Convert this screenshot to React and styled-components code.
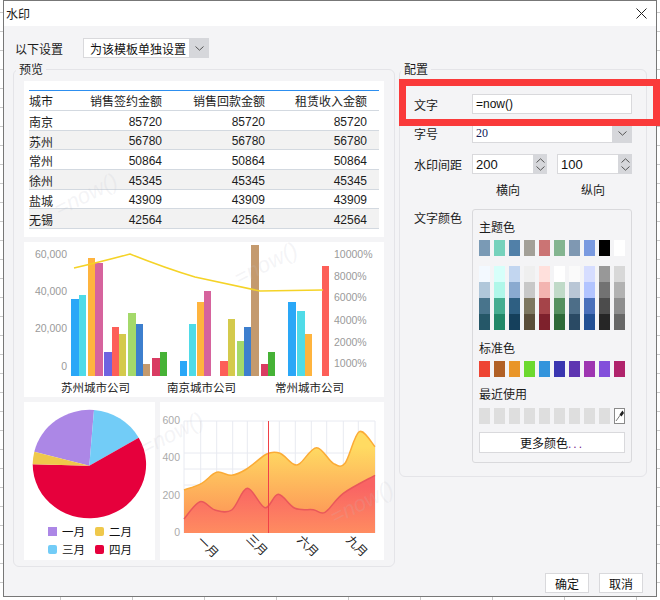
import React from "react";
import styled, { createGlobalStyle } from "styled-components";

const GlobalStyle = createGlobalStyle`
  html, body {
    margin: 0;
    height: 100%;
    overflow: hidden;
    background-color: #fff;
    background-image:
      linear-gradient(#c9c9c9 1px, transparent 1px),
      linear-gradient(90deg, #c9c9c9 1px, transparent 1px);
    background-size: 72px 19px;
    background-position: 60px 12px;
  }
  * { box-sizing: border-box; }
`;

const Page = styled.div`
  position: relative;
  width: 660px;
  height: 600px;
  padding: 0 3px 3px;
  font-family: "Liberation Sans", "Noto Sans CJK SC", sans-serif;
  font-size: 12px;
  color: #1c1c1c;
`;

const Dialog = styled.div`
  height: 597px;
  display: flex;
  flex-direction: column;
  border: 1px solid #777;
`;

const TitleBar = styled.div`
  height: 25px;
  flex: none;
  display: flex;
  align-items: center;
  justify-content: space-between;
  padding: 0 9px 0 2px;
  background: #fff;
`;

const Body = styled.div`
  flex: 1;
  display: flex;
  flex-direction: column;
  padding: 12px 9px 3px;
  background: #f4f4f6;
`;

const SettingRow = styled.div`
  height: 20px;
  display: flex;
  align-items: center;
  gap: 20px;
  padding-left: 2px;
`;

const Columns = styled.div`
  display: flex;
  align-items: flex-start;
  gap: 4px;
  margin-top: 3px;
`;

const Group = styled.fieldset`
  position: relative;
  flex: none;
  margin: 0;
  min-width: 0;
  width: ${(p) => p.$width}px;
  height: ${(p) => p.$height}px;
  border: 1px solid #e4e4e8;
  border-radius: 6px;
  padding: ${(p) => p.$padding};
`;

const Legend = styled.legend`
  margin-left: ${(p) => p.$offset}px;
  padding: 0 3px;
  height: 16px;
  line-height: 18px;
`;

const Panel = styled.div`
  background: #fff;
  flex: none;
  width: ${(p) => p.$width || 360}px;
  height: ${(p) => p.$height}px;
  padding: ${(p) => p.$padding || 0};
  margin-bottom: ${(p) => p.$gap || 0}px;
  overflow: hidden;
`;

const PanelRow = styled.div`
  display: flex;
  gap: 5px;
`;

const DataTable = styled.div`
  border-top: 1px solid #2d8ff0;
`;

const DataRow = styled.div`
  display: grid;
  grid-template-columns: 40px 93px 103px 102px;
  align-items: center;
  height: ${(p) => p.$height}px;
  padding-top: ${(p) => p.$nudge || 0}px;
  border-bottom: 1px solid #d3d9e0;
  background: ${(p) => (p.$striped ? "#f2f2f2" : "#fff")};
  white-space: nowrap;
`;

const NumCell = styled.span`
  text-align: right;
`;

const Chart = styled.svg`
  display: block;
`;

const PieLegend = styled.div`
  display: grid;
  grid-template-columns: 47px 47px;
  row-gap: 4px;
  margin-top: 2px;
  padding-left: 24px;
`;

const LegendItem = styled.div`
  display: flex;
  align-items: center;
  gap: 5px;
  height: 14px;
  font-size: 11.5px;
  color: #111;
`;

const LegendSwatch = styled.i`
  width: 9px;
  height: 9px;
  border-radius: ${(p) => (p.$round ? 2 : 0)}px;
  background: ${(p) => p.$color};
`;

const Watermark = styled.span`
  position: absolute;
  left: ${(p) => p.$x}px;
  top: ${(p) => p.$y}px;
  transform: translate(-50%, -50%) rotate(-27deg);
  font-size: 22px;
  font-style: italic;
  color: rgba(190, 190, 200, 0.16);
  pointer-events: none;
`;

const FormRow = styled.div`
  display: flex;
  align-items: ${(p) => (p.$top ? "flex-start" : "center")};
  min-height: 20px;
  margin-top: ${(p) => p.$mt || 0}px;
`;

const FieldLabel = styled.label`
  width: 58px;
  flex: none;
`;

const Field = styled.div`
  width: ${(p) => p.$width}px;
  height: 20px;
  display: flex;
  align-items: center;
  justify-content: space-between;
  background: #fff;
  border: 1px solid #d9d9dc;
  padding-left: ${(p) => p.$pad || 3}px;
  font-size: ${(p) => p.$size || 12}px;
  color: #111;
`;

const SizeValue = styled.span`
  font-family: "Liberation Serif", serif;
  color: #12205a;
`;

const ArrowBox = styled.span`
  width: 20px;
  height: 20px;
  margin-right: -1px;
  flex: none;
  display: flex;
  align-items: center;
  justify-content: center;
  background: #d6d7db;
`;

const Spinner = styled.span`
  width: 14px;
  height: 20px;
  margin-right: -1px;
  flex: none;
  display: flex;
  flex-direction: column;
  align-items: center;
  justify-content: space-around;
  padding: 2px 0;
  background: #d6d7db;
`;

const Pair = styled.div`
  display: flex;
  gap: 10px;
`;

const AxisNames = styled.div`
  display: flex;
  margin: 10px 0 0 82px;
  gap: 61px;
  height: 14px;
  line-height: 15px;
`;

const ColorPanel = styled.div`
  width: 160px;
  height: 254px;
  padding: 0 6px;
  border: 1px solid #d9d9dc;
  border-radius: 3px;
`;

const ColorTitle = styled.div`
  height: 16px;
  line-height: 16px;
  margin-top: ${(p) => p.$mt}px;
`;

const SwatchRow = styled.div`
  display: flex;
  gap: 4px;
  margin-top: ${(p) => p.$mt || 0}px;
`;

const Swatch = styled.i`
  display: block;
  width: 11px;
  height: 16px;
  flex: none;
  background: ${(p) => p.$color};
`;

const Dropper = styled.span`
  width: 11px;
  height: 16px;
  flex: none;
  display: flex;
  align-items: center;
  justify-content: center;
  background: #fff;
  border: 1px solid #8a8a8a;
`;

const MoreButton = styled.button`
  display: block;
  width: 146px;
  height: 21px;
  margin-top: 8px;
  padding: 0;
  font: inherit;
  color: #111;
  background: #fff;
  border: 1px solid #d9d9dc;
`;

const Dots = styled.span`
  color: #7a2a8a;
  letter-spacing: 2px;
`;

const Footer = styled.div`
  margin-top: auto;
  padding-right: 4px;
  display: flex;
  justify-content: flex-end;
  gap: 10px;
`;

const FootButton = styled.button`
  width: 44px;
  height: 20px;
  padding: 0;
  font: inherit;
  color: #111;
  background: #fff;
  border: 1px solid #d9d9dc;
`;

const Highlight = styled.div`
  position: absolute;
  left: 399px;
  top: 79px;
  width: 261px;
  height: 47px;
  border: 7px solid #fa3a3a;
  pointer-events: none;
`;

const rows = [
  ["南京", 85720],
  ["苏州", 56780],
  ["常州", 50864],
  ["徐州", 45345],
  ["盐城", 43909],
  ["无锡", 42564],
];

const themeColors = ["#7a9ab5", "#76d2bc", "#5180a8", "#a3a098", "#cb7474", "#84b590", "#7f98b2", "#7a9ae0", "#000000", "#ffffff"];
const tintRows = [
  ["#f3f9ff", "#d7fffa", "#c2d6f0", "#efefef", "#ffe0dc", "#ffffff", "#fafafa", "#d6ddff", "#989898", "#d8d8d8"],
  ["#b0c7da", "#b0f7e9", "#8aaad0", "#c8c8c8", "#f3b4b0", "#c0dac8", "#b9c6d5", "#b2c4ff", "#727272", "#b2b2b2"],
  ["#48748c", "#46ad90", "#2e5f82", "#7d7760", "#a54449", "#55905f", "#4d6e88", "#4a70bb", "#4c4c4c", "#8e8e8e"],
  ["#255768", "#228868", "#15405c", "#5a4e3a", "#7e212c", "#2e6a38", "#2a4a64", "#235095", "#262626", "#686868"],
];
const standardColors = ["#ee4433", "#b16025", "#e99528", "#6cd92f", "#3394dc", "#3a35b0", "#5e35b1", "#9e35b1", "#834fdb", "#b0236b"];

const BLUE = "#2aa7f7";
const CYAN = "#4fdbe8";
const ORANGE = "#ffb43e";
const PINK = "#d6639d";
const RED = "#fd5f58";
const YELLOW = "#d4ca4c";
const LIME = "#a4d96a";
const STEEL = "#3d7fce";
const TAN = "#c49a6e";
const CRIMSON = "#d93c62";
const GREEN = "#46b236";

// [x, width, top, colour] in page pixels, every bar ends on y = 376
const bars = [
  [71, 8, 299, BLUE], [79, 7, 295, CYAN], [88, 7, 258, ORANGE], [95, 8, 263, PINK],
  [104, 8, 352, "#6f63e0"], [112, 7, 327, RED], [119, 7, 334, YELLOW], [128, 8, 313, LIME],
  [136, 7, 324, STEEL], [143, 7, 364, TAN], [152, 8, 358, CRIMSON], [160, 7, 352, GREEN],
  [180, 7, 361, BLUE], [189, 7, 324, CYAN], [197, 7, 302, ORANGE], [204, 7, 291, PINK],
  [220, 8, 361, RED], [228, 7, 319, YELLOW], [237, 7, 341, LIME], [244, 7, 327, STEEL],
  [251, 8, 245, TAN], [261, 7, 364, CRIMSON], [268, 7, 352, GREEN],
  [288, 8, 302, BLUE], [297, 8, 311, CYAN], [305, 7, 334, ORANGE], [322, 7, 266, RED],
];

const leftTicks = [["60,000", 258], ["40,000", 295], ["20,000", 332], ["0", 370]];
const rightTicks = [["10000%", 258], ["8000%", 280], ["6000%", 301], ["4000%", 324], ["2000%", 346], ["1000%", 367]];

const yellowCurve = [[184, 490], [201.7, 483.3], [216.7, 472.3], [231.7, 475.3], [246.7, 469], [266.7, 454], [280, 453.3], [292.7, 463.7], [300, 463.3], [316.7, 447.7], [333.3, 463.3], [345, 463.3], [359.3, 431.7], [375, 446.7]];
const redCurve = [[184, 519], [200, 501.7], [215, 510], [231.7, 510], [247.3, 488.3], [265, 507.7], [278.3, 494.3], [295, 508.3], [313.3, 509.7], [325, 512.3], [343.3, 493.3], [375, 475.3]];

const gridX = [184, 200.7, 216.7, 232.7, 247.3, 263, 279.3, 295.3, 311.3, 326.7, 343.3, 358.3, 375];
const gridY = [421, 453, 469, 485];

const smooth = (pts) => {
  let d = `M${pts[0][0]} ${pts[0][1]}`;
  for (let i = 0; i < pts.length - 1; i++) {
    const p0 = pts[i - 1] || pts[i];
    const p1 = pts[i];
    const p2 = pts[i + 1];
    const p3 = pts[i + 2] || p2;
    const c1 = [p1[0] + (p2[0] - p0[0]) / 6, p1[1] + (p2[1] - p0[1]) / 6];
    const c2 = [p2[0] - (p3[0] - p1[0]) / 6, p2[1] - (p3[1] - p1[1]) / 6];
    d += ` C${c1[0]} ${c1[1]} ${c2[0]} ${c2[1]} ${p2[0]} ${p2[1]}`;
  }
  return d;
};

const Chevron = ({ up }) => (
  <svg width="9" height="5" viewBox="0 0 9 5">
    <path d={up ? "M.5 4.5 4.5 .8 8.5 4.5" : "M.5 .5 4.5 4.2 8.5 .5"} fill="none" stroke="#555" strokeWidth="1" />
  </svg>
);

const SelectBox = ({ width, pad, children }) => (
  <Field $width={width} $pad={pad}>
    {children}
    <ArrowBox>
      <Chevron />
    </ArrowBox>
  </Field>
);

const NumberBox = ({ value }) => (
  <Field $width={75} $size={13}>
    {value}
    <Spinner>
      <Chevron up />
      <Chevron />
    </Spinner>
  </Field>
);

const BarChart = () => (
  <Chart width="360" height="155" viewBox="24 242 360 155">
    {bars.map(([x, w, top, color], i) => (
      <rect key={i} x={x} y={top} width={w} height={376 - top} fill={color} />
    ))}
    <path d="M74 268 Q100 262 130 254 Q165 268 195 277 L260 291 L323 290" fill="none" stroke="#f5d327" strokeWidth="1.6" />
    <g fontSize="10.5" fill="#9a9a9a">
      {leftTicks.map(([label, y]) => (
        <text key={label} x="67" y={y} textAnchor="end">{label}</text>
      ))}
      {rightTicks.map(([label, y]) => (
        <text key={label} x="334" y={y}>{label}</text>
      ))}
    </g>
    <g fontSize="11.5" fill="#222">
      <text x="61" y="392">苏州城市公司</text>
      <text x="167" y="392">南京城市公司</text>
      <text x="275" y="392">常州城市公司</text>
    </g>
  </Chart>
);

const PieChart = () => (
  <Chart width="131" height="120" viewBox="24 402 131 120">
    <path d="M89.3 465.7 L34.3 451.7 A56.7 54 0 0 1 94 410 Z" fill="#ac87e6" />
    <path d="M89.3 465.7 L94 410 A56.7 54 0 0 1 138.7 437.7 Z" fill="#72ccf7" />
    <path d="M89.3 465.7 L138.7 437.7 A56.7 54 0 1 1 32.7 464.3 Z" fill="#e6003c" />
    <path d="M89.3 465.7 L32.7 464.3 A56.7 54 0 0 1 34.3 451.7 Z" fill="#efc84b" />
  </Chart>
);

const AreaChart = () => (
  <Chart width="224" height="158" viewBox="160 402 224 158">
    <defs>
      <linearGradient id="areaTop" x1="0" y1="0" x2="0" y2="1">
        <stop offset="0.15" stopColor="#ffdb62" />
        <stop offset="0.8" stopColor="#fd9c58" />
      </linearGradient>
      <linearGradient id="areaBottom" x1="0" y1="0" x2="0" y2="1">
        <stop offset="0.2" stopColor="#f96464" />
        <stop offset="1" stopColor="#ff8c60" />
      </linearGradient>
    </defs>
    {gridX.map((x) => (
      <line key={x} x1={x} y1="421" x2={x} y2="533" stroke="#e8eaf1" />
    ))}
    {gridY.map((y) => (
      <line key={y} x1="184" y1={y} x2="375" y2={y} stroke="#e8eaf1" />
    ))}
    <path d={`${smooth(yellowCurve)} L375 533 L184 533 Z`} fill="url(#areaTop)" />
    <path d={smooth(yellowCurve)} fill="none" stroke="#fbab36" strokeWidth="1.5" />
    <path d={`${smooth(redCurve)} L375 533 L184 533 Z`} fill="url(#areaBottom)" />
    <path d={smooth(redCurve)} fill="none" stroke="#e9585a" strokeWidth="1.5" />
    <line x1="268.5" y1="421" x2="268.5" y2="533" stroke="#f04048" />
    <g fontSize="10.5" fill="#aaa" textAnchor="end">
      <text x="180" y="424">600</text>
      <text x="180" y="461">400</text>
      <text x="180" y="499">200</text>
      <text x="180" y="536">0</text>
    </g>
    <g fontSize="12" fill="#222" textAnchor="middle">
      <text transform="translate(205 550) rotate(45)">一月</text>
      <text transform="translate(254 548) rotate(45)">三月</text>
      <text transform="translate(305 549) rotate(45)">六月</text>
      <text transform="translate(354 549) rotate(45)">九月</text>
    </g>
  </Chart>
);

const App = () => (
  <Page>
    <GlobalStyle />
    <Dialog>
      <TitleBar>
        水印
        <svg width="11" height="11" viewBox="0 0 11 11">
          <path d="M.5 .5 10.5 10.5 M10.5 .5 .5 10.5" stroke="#222" strokeWidth="1" />
        </svg>
      </TitleBar>
      <Body>
        <SettingRow>
          以下设置
          <SelectBox width={126} pad={6}>
            <span>为该模板单独设置</span>
          </SelectBox>
        </SettingRow>
        <Columns>
          <Group $width={382} $height={506} $padding="4px 10px 0">
            <Legend $offset={-8}>预览</Legend>
            <Panel $height={156} $gap={5} $padding="9px 5px 0">
              <DataTable>
                <DataRow $height={20}>
                  <span>城市</span>
                  <NumCell>销售签约金额</NumCell>
                  <NumCell>销售回款金额</NumCell>
                  <NumCell>租赁收入金额</NumCell>
                </DataRow>
                {rows.map(([city, value], i) => (
                  <DataRow key={city} $height={19.7} $nudge={2} $striped={i % 2 === 1}>
                    <span>{city}</span>
                    <NumCell>{value}</NumCell>
                    <NumCell>{value}</NumCell>
                    <NumCell>{value}</NumCell>
                  </DataRow>
                ))}
              </DataTable>
            </Panel>
            <Panel $height={155} $gap={5}>
              <BarChart />
            </Panel>
            <PanelRow>
              <Panel $width={131} $height={158}>
                <PieChart />
                <PieLegend>
                  <LegendItem><LegendSwatch $color="#ac87e6" />一月</LegendItem>
                  <LegendItem><LegendSwatch $color="#efc84b" $round />二月</LegendItem>
                  <LegendItem><LegendSwatch $color="#72ccf7" $round />三月</LegendItem>
                  <LegendItem><LegendSwatch $color="#e6003c" $round />四月</LegendItem>
                </PieLegend>
              </Panel>
              <Panel $width={224} $height={158}>
                <AreaChart />
              </Panel>
            </PanelRow>
            <Watermark $x={72} $y={118}>=now()</Watermark>
            <Watermark $x={252} $y={187}>=now()</Watermark>
            <Watermark $x={158} $y={357}>=now()</Watermark>
            <Watermark $x={348} $y={426}>=now()</Watermark>
          </Group>
          <Group $width={248} $height={416} $padding="17px 14px 0">
            <Legend $offset={-13}>配置</Legend>
            <FormRow>
              <FieldLabel>文字</FieldLabel>
              <Field $width={160}>=now()</Field>
            </FormRow>
            <FormRow $mt={9}>
              <FieldLabel>字号</FieldLabel>
              <SelectBox width={160}>
                <SizeValue>20</SizeValue>
              </SelectBox>
            </FormRow>
            <FormRow $mt={11}>
              <FieldLabel>水印间距</FieldLabel>
              <Pair>
                <NumberBox value="200" />
                <NumberBox value="100" />
              </Pair>
            </FormRow>
            <AxisNames>
              <span>横向</span>
              <span>纵向</span>
            </AxisNames>
            <FormRow $top $mt={11}>
              <FieldLabel>文字颜色</FieldLabel>
              <ColorPanel>
                <ColorTitle $mt={10}>主题色</ColorTitle>
                <SwatchRow $mt={4}>
                  {themeColors.map((c) => <Swatch key={c} $color={c} />)}
                </SwatchRow>
                {tintRows.map((tints, i) => (
                  <SwatchRow key={i} $mt={i === 0 ? 10 : 0}>
                    {tints.map((c) => <Swatch key={c} $color={c} />)}
                  </SwatchRow>
                ))}
                <ColorTitle $mt={11}>标准色</ColorTitle>
                <SwatchRow $mt={4}>
                  {standardColors.map((c) => <Swatch key={c} $color={c} />)}
                </SwatchRow>
                <ColorTitle $mt={10}>最近使用</ColorTitle>
                <SwatchRow $mt={5}>
                  {Array.from({ length: 9 }, (_, i) => <Swatch key={i} $color="#dedede" />)}
                  <Dropper>
                    <svg width="9" height="14" viewBox="0 0 9 14">
                      <path d="M1 12 6 5" stroke="#777" strokeWidth="1" />
                      <path d="M4.5 5.5 7.5 1.5 9 4 6.5 7.5Z" fill="#222" />
                    </svg>
                  </Dropper>
                </SwatchRow>
                <MoreButton>更多颜色<Dots>...</Dots></MoreButton>
              </ColorPanel>
            </FormRow>
          </Group>
        </Columns>
        <Footer>
          <FootButton>确定</FootButton>
          <FootButton>取消</FootButton>
        </Footer>
      </Body>
    </Dialog>
    <Highlight />
  </Page>
);

export default App;
